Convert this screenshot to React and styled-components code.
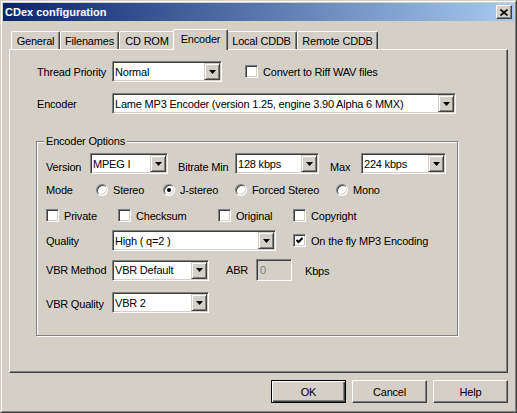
import React from 'react';
import styled, { createGlobalStyle } from 'styled-components';

const GlobalStyle = createGlobalStyle`
  html, body {
    margin: 0;
    padding: 0;
    background: #d4d0c8;
  }
  body {
    font-family: "Liberation Sans", Arial, sans-serif;
    font-size: 11px;
    letter-spacing: -0.2px;
    color: #000;
  }
  * {
    box-sizing: border-box;
  }
`;

const Window = styled.div`
  width: 517px;
  height: 413px;
  background: #d4d0c8;
  border: 1px solid;
  border-color: #d4d0c8 #404040 #404040 #d4d0c8;
  display: flex;
  flex-direction: column;
`;

const Frame = styled.div`
  flex: 1;
  display: flex;
  flex-direction: column;
  border: 1px solid;
  border-color: #fff #808080 #808080 #fff;
  padding: 1px;
`;

const TitleBar = styled.div`
  height: 18px;
  flex: none;
  display: flex;
  align-items: center;
  padding: 0 2px 0 2px;
  background: linear-gradient(to right, #0a246a, #a6caf0);
`;

const Title = styled.span`
  color: #fff;
  font-weight: bold;
  font-size: 11px;
  letter-spacing: 0;
`;

const CloseButton = styled.div`
  width: 16px;
  height: 14px;
  margin-left: auto;
  background: #d4d0c8;
  border: 1px solid;
  border-color: #fff #404040 #404040 #fff;
  box-shadow: inset -1px -1px #808080;
  display: flex;
  align-items: center;
  justify-content: center;
`;

const Body = styled.div`
  padding: 8px 6px 0 6px;
  display: flex;
  flex-direction: column;
`;

const TabStrip = styled.div`
  height: 20px;
  display: flex;
  align-items: flex-end;
  padding-left: 2px;
`;

const Tab = styled.div`
  width: ${p => (p.$active ? p.$w + 4 : p.$w)}px;
  height: ${p => (p.$active ? 21 : 18)}px;
  margin: 0 ${p => (p.$active ? -2 : 0)}px ${p => (p.$active ? -1 : 0)}px;
  padding-bottom: ${p => (p.$active ? 3 : 0)}px;
  position: relative;
  z-index: ${p => (p.$active ? 2 : 1)};
  flex: none;
  display: flex;
  align-items: center;
  justify-content: center;
  background: #d4d0c8;
  border-top: 1px solid #fff;
  border-left: 1px solid #fff;
  border-right: 1px solid #404040;
  border-radius: 2px 2px 0 0;
  box-shadow: inset -1px 0 #808080;
  white-space: nowrap;
`;

const Panel = styled.div`
  height: 324px;
  flex: none;
  border: 1px solid;
  border-color: #fff #404040 #404040 #fff;
  box-shadow: inset -1px -1px #808080;
  padding: 11px 0 0 27px;
  display: flex;
  flex-direction: column;
`;

const Row = styled.div`
  display: flex;
  align-items: center;
  height: ${p => p.$h || 21}px;
  margin-top: ${p => p.$mt || 0}px;
`;

const Label = styled.span`
  width: ${p => (p.$w ? `${p.$w}px` : 'auto')};
  flex: none;
  white-space: nowrap;
  margin-top: ${p => (p.$dy || 0) * 2}px;
  color: ${p => (p.$dim ? '#808080' : '#000')};
`;

const Gap = styled.span`
  width: ${p => p.$w}px;
  flex: none;
`;

const ComboBox = styled.div`
  width: ${p => p.$w}px;
  height: 21px;
  flex: none;
  display: flex;
  align-items: center;
  background: #fff;
  border: 1px solid;
  border-color: #808080 #fff #fff #808080;
  box-shadow: inset 1px 1px #404040, inset -1px -1px #d4d0c8;
  padding: 1px;
`;

const ComboValue = styled.span`
  flex: 1;
  padding-left: 1px;
  white-space: nowrap;
  overflow: hidden;
`;

const DropButton = styled.span`
  width: 16px;
  height: 17px;
  flex: none;
  display: flex;
  align-items: center;
  justify-content: center;
  background: #d4d0c8;
  border: 1px solid;
  border-color: #d4d0c8 #404040 #404040 #d4d0c8;
  box-shadow: inset 1px 1px #fff, inset -1px -1px #808080;
`;

const Edit = styled.div`
  width: ${p => p.$w}px;
  height: 22px;
  flex: none;
  display: flex;
  align-items: center;
  padding-left: 3px;
  background: #d4d0c8;
  color: #808080;
  border: 1px solid;
  border-color: #808080 #fff #fff #808080;
  box-shadow: inset 1px 1px #404040, inset -1px -1px #d4d0c8;
`;

const Option = styled.label`
  width: ${p => (p.$w ? `${p.$w}px` : 'auto')};
  flex: none;
  display: flex;
  align-items: center;
  gap: 5px;
  white-space: nowrap;
`;

const Box = styled.span`
  width: 13px;
  height: 13px;
  flex: none;
  display: flex;
  align-items: center;
  justify-content: center;
  background: #fff;
  border: 1px solid;
  border-color: #808080 #fff #fff #808080;
  box-shadow: inset 1px 1px #404040, inset -1px -1px #d4d0c8;
`;

const Radio = styled.span`
  width: 12px;
  height: 12px;
  flex: none;
  border-radius: 50%;
  display: flex;
  align-items: center;
  justify-content: center;
  background: #fff;
  border: 1px solid;
  border-color: #808080 #fff #fff #808080;
  box-shadow: inset 1px 1px #404040, inset -1px -1px #d4d0c8;

  &::after {
    content: '';
    width: 4px;
    height: 4px;
    border-radius: 50%;
    background: ${p => (p.$on ? '#000' : 'transparent')};
  }
`;

const Group = styled.div`
  position: relative;
  width: 422px;
  height: 195px;
  margin: 27px 0 0 -1px;
  border: 1px solid #808080;
  box-shadow: inset 1px 1px #fff, 1px 1px #fff;
  padding: 11px 0 0 9px;
  display: flex;
  flex-direction: column;
`;

const Legend = styled.span`
  position: absolute;
  top: -7px;
  left: 7px;
  padding: 0 2px;
  background: #d4d0c8;
  line-height: 13px;
`;

const ButtonRow = styled.div`
  display: flex;
  justify-content: flex-end;
  gap: 6px;
  margin-top: 7px;
`;

const Button = styled.div`
  width: 75px;
  height: 23px;
  display: flex;
  align-items: center;
  justify-content: center;
  background: #d4d0c8;
  border: 1px solid;
  border-color: ${p => (p.$default ? '#000' : '#fff #404040 #404040 #fff')};
  box-shadow: ${p =>
    p.$default
      ? 'inset 1px 1px #fff, inset -1px -1px #404040, inset -2px -2px #808080'
      : 'inset -1px -1px #808080'};
`;

const Arrow = () => (
  <svg width="7" height="4" viewBox="0 0 7 4">
    <polygon points="0,0 7,0 3.5,4" fill="#000" />
  </svg>
);

const Combo = ({ w, value }) => (
  <ComboBox $w={w}>
    <ComboValue>{value}</ComboValue>
    <DropButton>
      <Arrow />
    </DropButton>
  </ComboBox>
);

const Check = ({ w, checked, children }) => (
  <Option $w={w}>
    <Box>
      {checked && (
        <svg width="7" height="7" viewBox="0 0 7 7">
          <polyline points="0.5,3 2.5,5 6.5,1" fill="none" stroke="#000" strokeWidth="2" />
        </svg>
      )}
    </Box>
    {children}
  </Option>
);

const RadioOption = ({ w, on, children }) => (
  <Option $w={w}>
    <Radio $on={on} />
    {children}
  </Option>
);

const tabs = [
  { name: 'General', w: 49 },
  { name: 'Filenames', w: 59 },
  { name: 'CD ROM', w: 56 },
  { name: 'Encoder', w: 51, active: true },
  { name: 'Local CDDB', w: 71 },
  { name: 'Remote CDDB', w: 81 },
];

const App = () => {
  return (
    <>
      <GlobalStyle />
      <Window>
        <Frame>
          <TitleBar>
            <Title>CDex configuration</Title>
            <CloseButton>
              <svg width="8" height="7" viewBox="0 0 8 7">
                <path d="M0.5 0.5 L7.5 6.5 M7.5 0.5 L0.5 6.5" stroke="#000" strokeWidth="1.6" />
              </svg>
            </CloseButton>
          </TitleBar>

          <Body>
            <TabStrip>
              {tabs.map(t => (
                <Tab key={t.name} $w={t.w} $active={t.active}>
                  {t.name}
                </Tab>
              ))}
            </TabStrip>

            <Panel>
              <Row>
                <Label $w={75}>Thread Priority</Label>
                <Combo w={110} value="Normal" />
                <Gap $w={23} />
                <Check>Convert to Riff WAV files</Check>
              </Row>
              <Row $mt={11}>
                <Label $w={75}>Encoder</Label>
                <Combo w={344} value="Lame MP3 Encoder (version 1.25, engine 3.90 Alpha 6 MMX)" />
              </Row>

              <Group>
                <Legend>Encoder Options</Legend>
                <Row>
                  <Label $w={44} $dy={3.5}>Version</Label>
                  <Combo w={78} value="MPEG I" />
                  <Gap $w={10} />
                  <Label $w={57} $dy={3.5}>Bitrate Min</Label>
                  <Combo w={84} value="128 kbps" />
                  <Gap $w={11} />
                  <Label $w={31} $dy={3.5}>Max</Label>
                  <Combo w={85} value="224 kbps" />
                </Row>
                <Row $h={14} $mt={9}>
                  <Label $w={50}>Mode</Label>
                  <RadioOption w={67}>Stereo</RadioOption>
                  <RadioOption w={72} on>J-stereo</RadioOption>
                  <RadioOption w={101}>Forced Stereo</RadioOption>
                  <RadioOption>Mono</RadioOption>
                </Row>
                <Row $h={13} $mt={12}>
                  <Check w={72}>Private</Check>
                  <Check w={100}>Checksum</Check>
                  <Check w={75}>Original</Check>
                  <Check>Copyright</Check>
                </Row>
                <Row $mt={8}>
                  <Label $w={66}>Quality</Label>
                  <Combo w={164} value="High ( q=2 )" />
                  <Gap $w={17} />
                  <Check checked>On the fly MP3 Encoding</Check>
                </Row>
                <Row $h={22} $mt={8}>
                  <Label $w={66}>VBR Method</Label>
                  <Combo w={97} value="VBR Default" />
                  <Gap $w={17} />
                  <Label $w={30}>ABR</Label>
                  <Edit $w={36}>0</Edit>
                  <Gap $w={13} />
                  <Label $dy={1}>Kbps</Label>
                </Row>
                <Row $mt={11}>
                  <Label $w={66} $dy={1.5}>VBR Quality</Label>
                  <Combo w={97} value="VBR 2" />
                </Row>
              </Group>
            </Panel>

            <ButtonRow>
              <Button $default>OK</Button>
              <Button>Cancel</Button>
              <Button>Help</Button>
            </ButtonRow>
          </Body>
        </Frame>
      </Window>
    </>
  );
};

export default App;
